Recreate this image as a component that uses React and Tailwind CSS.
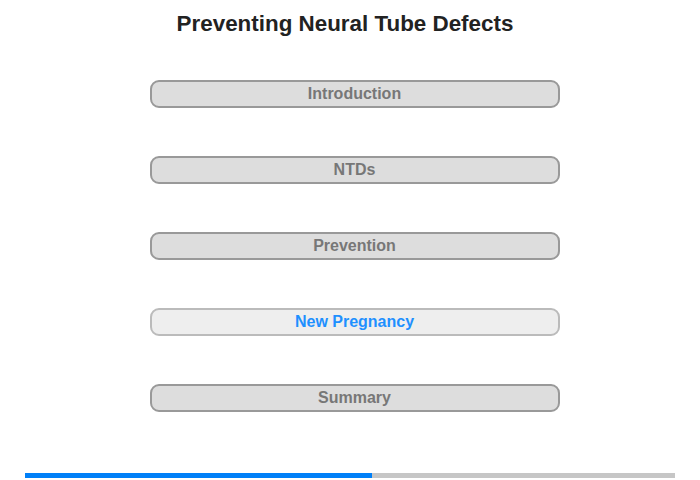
const topics = [
  { label: 'Introduction' },
  { label: 'NTDs' },
  { label: 'Prevention' },
  { label: 'New Pregnancy', active: true },
  { label: 'Summary' },
];

export default function App() {
  return (
    <div className="w-[700px] h-[480px] bg-white font-['Liberation_Sans',Arial,sans-serif] flex flex-col">
      <h1 className="text-center text-[22.4px] font-bold text-[#222] pt-[10px] leading-[28px] pr-[10px]">
        Preventing Neural Tube Defects
      </h1>

      <div className="flex flex-col items-center gap-[48px] mt-[42px] pl-[9px]">
        {topics.map(({ label, active }) => (
          <button
            key={label}
            className={
              active
                ? 'w-[410px] h-[28px] rounded-[9px] border-2 border-[#bbbbbb] bg-[#eeeeee] text-[#1e90ff] text-[16px] font-bold leading-none'
                : 'w-[410px] h-[28px] rounded-[9px] border-2 border-[#999999] bg-[#dddddd] text-[#777777] text-[16px] font-bold leading-none'
            }
          >
            {label}
          </button>
        ))}
      </div>

      <div className="mt-auto mb-[2px] mx-[25px] h-[5px] bg-[#c6c6c6] flex">
        <div className="w-[347px] bg-[#0080f8]" />
      </div>
    </div>
  );
}
